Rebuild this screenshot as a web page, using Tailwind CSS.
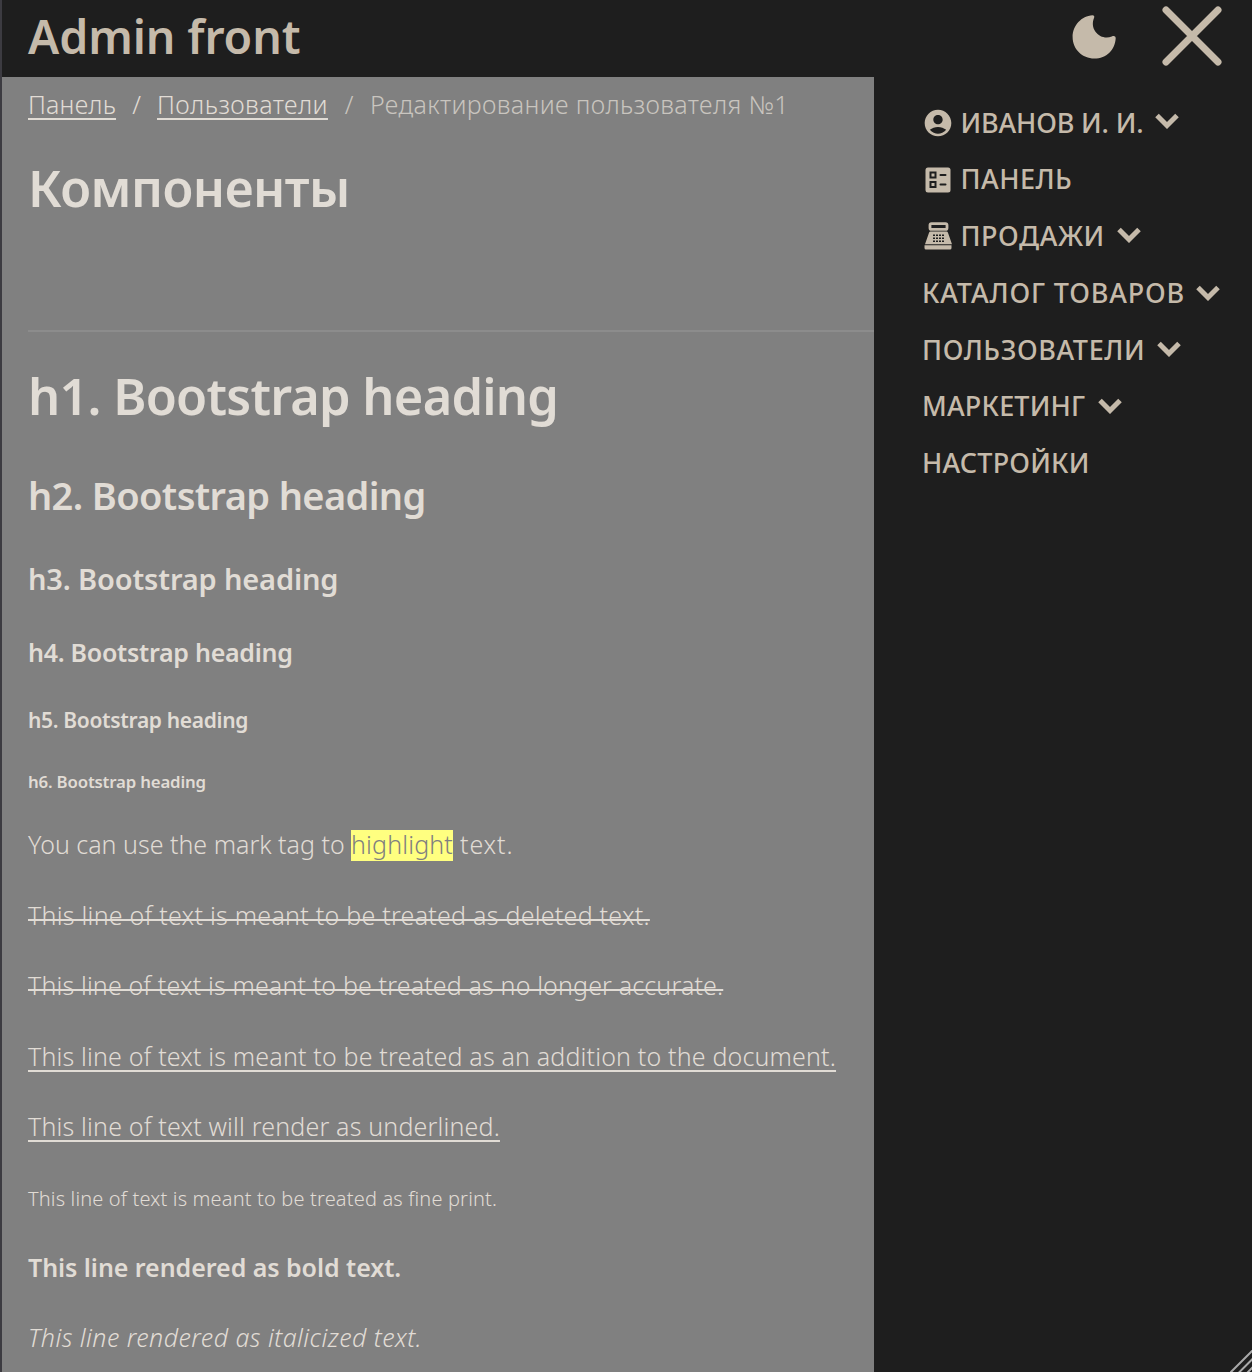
<!DOCTYPE html>
<html lang="ru">
<head>
<meta charset="utf-8">
<title>Admin front</title>
<script src="https://cdn.jsdelivr.net/npm/@tailwindcss/browser@4"></script>
</head>
<body class="h-[1372px] overflow-hidden bg-[#1e1e1e] font-['Noto_Sans',sans-serif]">
<svg class="hidden">
  <symbol id="chev" viewBox="0 0 24 16"><path d="M2 2.5 12 12.5 22 2.5" fill="none" stroke="currentColor" stroke-width="5"/></symbol>
</svg>
<div class="relative flex h-full flex-col border-l-2 border-[#3c3b41]">
  <header class="flex h-[77px] shrink-0 items-start pl-[26px] text-[#c5baaa]">
    <div class="text-[46.5px] leading-[72px] font-semibold tracking-[-0.1px]">Admin front</div>
    <svg class="mt-[14px] ml-auto size-[46px]" viewBox="0 0 46 46" fill="currentColor"><path d="M21.500 1.200c1.500 0 2.200 1.200 1.600 2.600-1.900 4.400-1.700 9.600 1.200 13.700 3.700 5.300 10.500 7.500 16.500 5 2-.9 3.900-.4 3.900 1.700C44.200 35.500 35.500 44.600 23.300 44.600 11.300 44.600 1.600 35.300 1.600 23.100 1.600 11.300 10.600 1.900 21.500 1.200z"/></svg>
    <svg class="mt-[6px] mr-[30px] ml-[45px] size-[60px]" viewBox="0 0 60 60"><path d="M4 4 56 56M56 4 4 56" stroke="currentColor" stroke-width="7" stroke-linecap="round"/></svg>
  </header>
  <div class="flex min-h-0 flex-1">
    <main class="w-[872px] shrink-0 overflow-hidden bg-[#808080] pl-[26px] text-[25px] font-light whitespace-nowrap text-[#e1dcd5]">
      <nav class="flex leading-[54px]">
        <a class="w-[88px] tracking-[0.2px] underline decoration-2 underline-offset-[4px] [text-decoration-skip-ink:none]">Панель</a>
        <span class="w-[41px] text-center">/</span>
        <a class="w-[171px] tracking-[0.42px] underline decoration-2 underline-offset-[4px] [text-decoration-skip-ink:none]">Пользователи</a>
        <span class="w-[42px] text-center text-[#c9c5bf]">/</span>
        <span class="tracking-[0.37px] text-[#c9c5bf]">Редактирование пользователя №1</span>
      </nav>
      <h1 class="mt-6 text-[50.5px] leading-[65px] font-semibold tracking-[-0.5px]">Компоненты</h1>
      <hr class="mt-[110px] border-t-2 border-[#8c8c8c]">
      <h1 class="mt-[31px] text-[50.5px] leading-[65px] font-semibold tracking-[-0.75px]">h1. Bootstrap heading</h1>
      <h2 class="mt-[42px] text-[38px] leading-[51px] font-semibold tracking-[-0.63px]">h2. Bootstrap heading</h2>
      <h3 class="mt-[38px] text-[29px] leading-[39px] font-semibold tracking-[-0.15px]">h3. Bootstrap heading</h3>
      <h4 class="mt-[38px] text-[25px] leading-[33px] font-semibold tracking-[-0.27px]">h4. Bootstrap heading</h4>
      <h5 class="mt-[37px] text-[21px] leading-[28px] font-semibold tracking-[-0.33px]">h5. Bootstrap heading</h5>
      <h6 class="mt-[36px] text-[16.8px] leading-[23px] font-semibold tracking-[-0.17px]">h6. Bootstrap heading</h6>
      <p class="mt-[32px] flex h-[38px] leading-[38px]"><span class="w-[323px]">You can use the mark tag to</span><mark class="mt-[5px] h-[31px] w-[102px] bg-[#ffff80] leading-[28px] tracking-[0.15px] text-[#808080]">highlight</mark><span class="pl-[7px] tracking-[0.9px]">text.</span></p>
      <p class="mt-[33px] leading-[38px] tracking-[0.25px]"><del class="underline decoration-2 underline-offset-[-6px] [text-decoration-skip-ink:none]">This line of text is meant to be treated as deleted text.</del></p>
      <p class="mt-[32px] leading-[38px] tracking-[0.14px]"><s class="underline decoration-2 underline-offset-[-6px] [text-decoration-skip-ink:none]">This line of text is meant to be treated as no longer accurate.</s></p>
      <p class="mt-[33px] leading-[38px] tracking-[0.16px]"><ins class="underline decoration-2 underline-offset-[4px] [text-decoration-skip-ink:none]">This line of text is meant to be treated as an addition to the document.</ins></p>
      <p class="mt-[32px] leading-[38px] tracking-[0.17px]"><u class="underline decoration-2 underline-offset-[4px] [text-decoration-skip-ink:none]">This line of text will render as underlined.</u></p>
      <p class="mt-[35px] text-[20px] leading-[38px] tracking-[0.16px]">This line of text is meant to be treated as fine print.</p>
      <p class="mt-[30px] leading-[38px] font-semibold tracking-[-0.05px]">This line rendered as bold text.</p>
      <p class="mt-[32px] leading-[38px] tracking-[0.45px] italic">This line rendered as italicized text.</p>
    </main>
    <aside class="flex flex-1 flex-col pt-[17.500px] pl-[48px] text-[27px] font-medium whitespace-nowrap text-[#c5baaa]">
      <div class="flex h-[56.750px] items-center"><svg class="size-[32px]" viewBox="0 0 24 24" fill="currentColor"><path d="M12 2C6.480 2 2 6.480 2 12s4.480 10 10 10 10-4.480 10-10S17.520 2 12 2zm0 4c1.930 0 3.500 1.570 3.500 3.500S13.930 13 12 13s-3.500-1.570-3.500-3.500S10.070 6 12 6zm0 14c-2.030 0-4.430-.82-6.140-2.880C7.550 15.800 9.680 15 12 15s4.450.8 6.140 2.120C16.430 19.180 14.030 20 12 20z"/></svg><span class="ml-[6.500px] w-[183px] tracking-[-0.150px]">ИВАНОВ И. И.</span><svg class="ml-[11px] -mt-[3px] h-[16px] w-[24px]"><use href="#chev"/></svg></div>
      <div class="flex h-[56.750px] items-center"><svg class="ml-[2px] h-[28px] w-[28px]" viewBox="0 0 28 28" fill="none"><rect x="1.500" y="1.500" width="25" height="25" rx="2.500" fill="currentColor"/><g stroke="#1e1e1e" stroke-width="2"><path d="M6.500 6.500h5v5h-5zM6.500 16h5v5h-5z"/><path stroke-linecap="round" d="M16.500 9h5M16.500 18.500h5"/></g></svg><span class="ml-[8.500px] tracking-[0.500px]">ПАНЕЛЬ</span></div>
      <div class="flex h-[56.750px] items-center"><svg class="ml-[2px] h-[28px] w-[28px]" viewBox="0 0 28 28"><rect x="6" y="1.600" width="17" height="5.800" rx="1.500" fill="none" stroke="currentColor" stroke-width="2.800"/><path fill="currentColor" d="M6.500 9.500h16q1 0 1.400 1L28 22.200H1l4.100-11.700q.4-1 1.400-1zM.500 23.200h27v2.800q0 1.500-1.500 1.500H2q-1.500 0-1.500-1.500z"/><path d="M9 13.200h11M9 16.200h11M9 19.200h11" stroke="#1e1e1e" stroke-width="1.500" stroke-dasharray="2 1"/></svg><span class="ml-[8.500px] w-[143px] tracking-[0.550px]">ПРОДАЖИ</span><svg class="ml-[13px] -mt-[2px] h-[16px] w-[24px]"><use href="#chev"/></svg></div>
      <div class="flex h-[56.750px] items-center"><span class="w-[263px] tracking-[0.830px]">КАТАЛОГ ТОВАРОВ</span><svg class="ml-[11px] -mt-[1px] h-[16px] w-[24px]"><use href="#chev"/></svg></div>
      <div class="flex h-[56.750px] items-center"><span class="w-[223px] tracking-[0.600px]">ПОЛЬЗОВАТЕЛИ</span><svg class="ml-[12px] -mt-[2px] h-[16px] w-[24px]"><use href="#chev"/></svg></div>
      <div class="flex h-[56.750px] items-center"><span class="w-[164px] tracking-[0.200px]">МАРКЕТИНГ</span><svg class="ml-[12px] -mt-[2px] h-[16px] w-[24px]"><use href="#chev"/></svg></div>
      <div class="flex h-[56.750px] items-center"><span class="tracking-[0.200px]">НАСТРОЙКИ</span></div>
    </aside>
  </div>
  <svg class="absolute right-0 bottom-0 size-[22px]" viewBox="0 0 22 22"><path d="M0 23 23 0M8.500 23 23 8.500M17 23 23 17" stroke="#a9a9a9" stroke-width="2"/></svg>
</div>
</body>
</html>
